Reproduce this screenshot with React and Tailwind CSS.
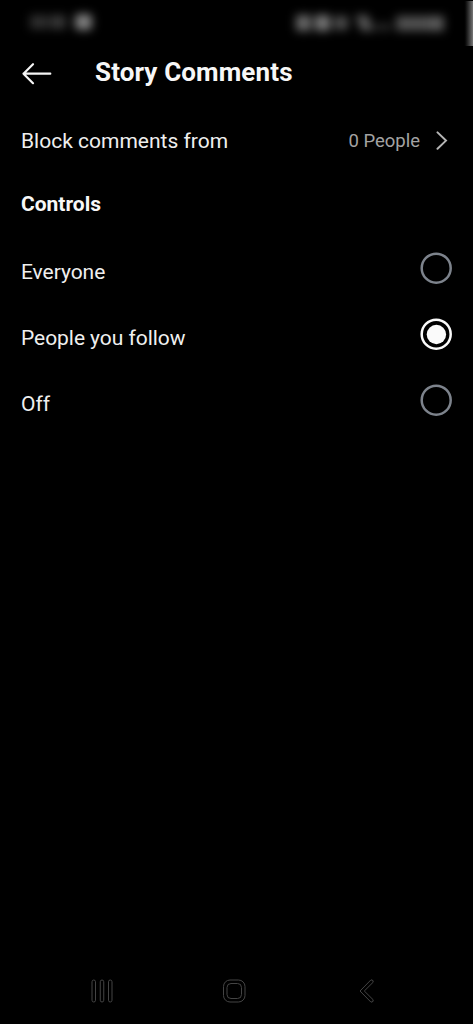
import { useState } from 'react';

const options = ['Everyone', 'People you follow', 'Off'];

const StatusBar = () => {
   return (
      <div className="flex h-[46px] items-start overflow-hidden">
         <div className="ml-[30px] mt-[14px] flex h-[15px] items-center blur-[5px]">
            <div className="h-[14px] w-[18px] bg-[#2e2e2e]" />
            <div className="ml-[2px] h-[14px] w-[16px] bg-[#363636]" />
            <div className="ml-[9px] h-[16px] w-[17px] rounded-sm bg-[#808080]" />
         </div>
         <div className="ml-auto mt-[15px] flex h-[16px] items-center blur-[5px]">
            <div className="h-[16px] w-[15px] bg-[#686868]" />
            <div className="ml-[4px] h-[16px] w-[15px] bg-[#767676]" />
            <div className="ml-[4px] h-[14px] w-[14px] bg-[#4c4c4c]" />
            <div className="ml-[10px] h-[16px] w-[13px] skew-x-[20deg] bg-[#565656]" />
            <div className="ml-[4px] mt-[7px] h-[8px] w-[16px] bg-[#262626]" />
            <div className="ml-[5px] h-[15px] w-[34px] bg-[#505050]" />
            <div className="h-[15px] w-[14px] bg-[#5a5a5a]" />
         </div>
         <div className="ml-[19px] mt-px h-[45px] w-[10px] bg-linear-to-r from-black to-[#777777]" />
      </div>
   );
};

const Radio = ({ checked }) => {
   return (
      <svg width="32" height="32" viewBox="0 0 32 32" fill="none">
         <circle
            cx="16.2"
            cy="16.2"
            r="14.5"
            stroke={checked ? '#fafafa' : '#7d838c'}
            strokeWidth="2.5"
         />
         {checked && <circle cx="16.4" cy="16.5" r="9.7" fill="#fafafa" />}
      </svg>
   );
};

const NavBar = () => {
   return (
      <div className="mt-auto flex h-[66px] items-center pl-[90px] text-[#444444]">
         <svg width="24" height="24" viewBox="0 0 24 24" fill="none" stroke="currentColor">
            <rect x="2" y="1" width="3.5" height="22" rx="1.75" />
            <rect x="10.25" y="1" width="3.5" height="22" rx="1.75" />
            <rect x="18.5" y="1" width="3.5" height="22" rx="1.75" />
         </svg>
         <svg
            className="ml-[108px]"
            width="24"
            height="24"
            viewBox="0 0 24 24"
            fill="none"
            stroke="currentColor"
         >
            <rect x="1.5" y="1" width="21.5" height="22" rx="6.5" />
            <rect x="5" y="4.5" width="14.5" height="15" rx="4" />
         </svg>
         <svg
            className="ml-[111px]"
            width="24"
            height="24"
            viewBox="0 0 24 24"
            fill="none"
            stroke="currentColor"
         >
            <path d="M14 .8 L3 12 L14 23.2 Q16.8 23 16.2 20.8 L7.3 12 L16.2 3.2 Q16.8 1 14 .8Z" />
         </svg>
      </div>
   );
};

const App = () => {
   const [selected, setSelected] = useState('People you follow');

   return (
      <div className="flex h-screen w-full flex-col overflow-hidden bg-black font-[Roboto,sans-serif] text-[21px] leading-none text-[#efefef]">
         <StatusBar />

         {/* Header */}
         <div className="flex h-[52px] items-center pl-[21px]">
            <svg
               className="mt-[3px]"
               width="32"
               height="24"
               viewBox="0 0 32 24"
               fill="none"
               stroke="#f5f5f5"
               strokeWidth="2.2"
               strokeLinecap="round"
               strokeLinejoin="round"
            >
               <path d="M12 2.2 L2.5 11.7 L12 21.2 M2.5 11.7 H29.3" />
            </svg>
            <h1 className="ml-[42px] text-[26px] font-bold tracking-[0.12px] text-[#f7f7f7]">
               Story Comments
            </h1>
         </div>

         {/* Blocked people */}
         <div className="flex h-[86px] items-center pl-[21px] pr-[25px]">
            <span>Block comments from</span>
            <span className="ml-auto text-[18.5px] text-[#a3a3a3]">0 People</span>
            <svg
               className="ml-[16px]"
               width="12"
               height="20"
               viewBox="0 0 12 20"
               fill="none"
               stroke="#b5b5b5"
               strokeWidth="2"
               strokeLinecap="round"
            >
               <path d="M1.5 1.4 L10 9.6 L1.5 17.8" />
            </svg>
         </div>

         <h2 className="flex h-[40px] items-center pl-[21px] font-bold text-[#f7f7f7]">
            Controls
         </h2>

         {/* Options */}
         <div className="mt-[15px]">
            {options.map((option) => (
               <button
                  key={option}
                  onClick={() => setSelected(option)}
                  className="flex h-[66px] w-full items-center justify-between pl-[21px] pr-[21px]"
               >
                  <span className="tracking-[-0.05px]">{option}</span>
                  <span className="mb-[8px]">
                     <Radio checked={selected === option} />
                  </span>
               </button>
            ))}
         </div>

         <NavBar />
      </div>
   );
};

export default App;
